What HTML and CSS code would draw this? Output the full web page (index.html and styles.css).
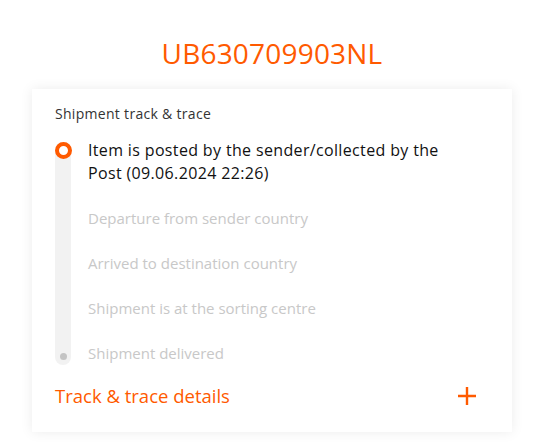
FILE: index.html
```html
<!DOCTYPE html>
<html lang="en">
<head>
<meta charset="utf-8">
<title>UB630709903NL</title>
<link rel="stylesheet" href="styles.css">
</head>
<body>
<main class="page">
  <h1 class="code">UB630709903NL</h1>
  <section class="card">
    <h2 class="card-title">Shipment track &amp; trace</h2>
    <div class="timeline">
      <div class="track">
        <span class="ring"></span>
        <span class="dot"></span>
      </div>
      <ol class="steps">
        <li class="step step-active">Item is posted by the sender/collected by the Post (09.06.2024 22:26)</li>
        <li class="step">Departure from sender country</li>
        <li class="step">Arrived to destination country</li>
        <li class="step">Shipment is at the sorting centre</li>
        <li class="step">Shipment delivered</li>
      </ol>
    </div>
    <div class="details">
      <span class="details-label">Track &amp; trace details</span>
      <svg class="plus" width="20" height="20" viewBox="0 0 20 20" aria-hidden="true">
        <path d="M10 1v18M1 10h18" stroke="#ff5a00" stroke-width="2.4" fill="none"/>
      </svg>
    </div>
  </section>
</main>
</body>
</html>
```

FILE: styles.css
```css
* { box-sizing: border-box; }
html, body { margin: 0; padding: 0; background: #ffffff; }
body {
  font-family: "Open Sans", "Noto Sans", "Liberation Sans", sans-serif;
  color: #222;
}
.page {
  width: 533px;
  height: 443px;
  padding-top: 35px;
}
.code {
  margin: 0;
  text-align: center;
  font-size: 28px;
  font-weight: 400;
  line-height: 36px;
  color: #ff5a00;
  letter-spacing: 0.2px;
  padding-left: 11px;
}
.card {
  margin: 18px 21px 0 32px;
  background: #fff;
  box-shadow: 0 0 12px rgba(0,0,0,0.08);
  padding: 16px 23px 24px 23px;
}
.card-title {
  margin: 0;
  font-size: 14px;
  font-weight: 400;
  line-height: 18px;
  color: #333;
  letter-spacing: 0.3px;
}
.timeline {
  display: flex;
  gap: 17px;
  margin-top: 19px;
}
.track {
  width: 16px;
  background: #f2f2f2;
  border-radius: 8px;
  display: flex;
  flex-direction: column;
  justify-content: space-between;
  align-items: center;
  padding-bottom: 5px;
}
.ring {
  width: 17px;
  height: 17px;
  flex: none;
  border-radius: 50%;
  border: 4px solid #ff5a00;
  background: #fff;
}
.dot {
  width: 7px;
  height: 7px;
  border-radius: 50%;
  background: #c4c4c4;
}
.steps {
  list-style: none;
  margin: -3px 0 0 0;
  padding: 0 30px 0 0;
  display: flex;
  flex-direction: column;
  gap: 22px;
}
.step {
  font-size: 15px;
  line-height: 23px;
  color: #c8c8c8;
}
.step-active {
  font-size: 16px;
  color: #111;
  letter-spacing: 0.35px;
}
.details {
  display: flex;
  justify-content: space-between;
  align-items: center;
  margin-top: 19px;
  padding-right: 12px;
}
.details-label {
  font-size: 18.5px;
  line-height: 24px;
  color: #ff5a00;
}
.plus { display: block; }
```
